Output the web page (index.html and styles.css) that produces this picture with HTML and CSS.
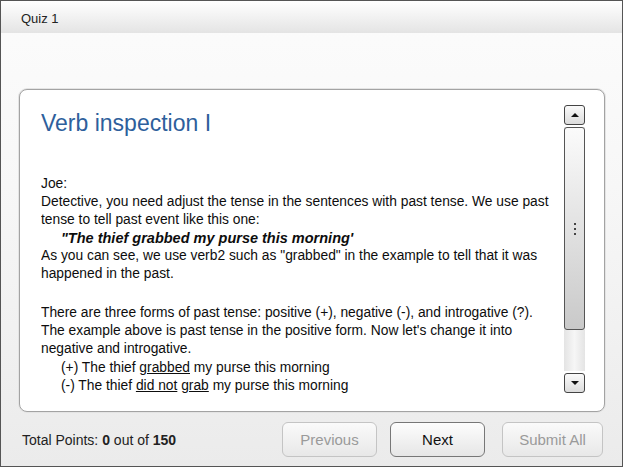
FILE: index.html
```html
<!DOCTYPE html>
<html>
<head>
<meta charset="utf-8">
<link rel="stylesheet" href="styles.css">
</head>
<body>
<div class="frame">
  <header class="topbar">Quiz 1</header>
  <main class="stage">
    <section class="card">
      <div class="content">
        <h1 class="title">Verb inspection I</h1>
        <p class="para">Joe:<br>Detective, you need adjust the tense in the sentences with past tense. We use past tense to tell past event like this one:</p>
        <p class="quote">"The thief grabbed my purse this morning'</p>
        <p class="para">As you can see, we use verb2 such as "grabbed" in the example to tell that it was happened in the past.</p>
        <p class="para gap">There are three forms of past tense: positive (+), negative (-), and introgative (?). The example above is past tense in the positive form. Now let's change it into negative and introgative.</p>
        <p class="item">(+) The thief <u>grabbed</u> my purse this morning</p>
        <p class="item">(-) The thief <u>did not</u> <u>grab</u> my purse this morning</p>
      </div>
      <div class="scrollbar">
        <div class="sb-btn"><span class="tri up"></span></div>
        <div class="track">
          <div class="thumb"><span class="grip"></span><span class="grip"></span><span class="grip"></span></div>
        </div>
        <div class="sb-btn"><span class="tri down"></span></div>
      </div>
    </section>
  </main>
  <footer class="footer">
    <div class="points">Total Points: <b>0</b> out of <b>150</b></div>
    <div class="buttons">
      <button class="btn disabled">Previous</button>
      <button class="btn">Next</button>
      <button class="btn disabled wide">Submit All</button>
    </div>
  </footer>
</div>
</body>
</html>
```
FILE: styles.css
```css
html, body {
  margin: 0;
  padding: 0;
  background: #fff;
}
.frame {
  width: 623px;
  height: 467px;
  box-sizing: border-box;
  border: 1px solid #555;
  display: flex;
  flex-direction: column;
  font-family: "Liberation Sans", Arial, sans-serif;
  color: #111;
  background: linear-gradient(#fcfcfc 0%, #f7f7f7 40%, #ebebeb 100%);
  overflow: hidden;
}
.topbar {
  height: 32px;
  box-sizing: border-box;
  padding: 10px 0 0 20px;
  font-size: 13px;
  line-height: 15px;
  color: #222;
  background: linear-gradient(#ffffff, #e4e4e4);
  flex: none;
}
.stage {
  flex: none;
  padding: 56px 0 0 18px;
}
.card {
  width: 586px;
  height: 323px;
  box-sizing: border-box;
  border: 1px solid #a3a3a3;
  border-radius: 8px;
  background: #fff;
  display: flex;
  padding: 15px 19px 18px 21px;
  box-shadow: 0 0 0 1px #e4e4e4;
}
.content {
  flex: 1;
  overflow: hidden;
  font-size: 13.8px;
  line-height: 18px;
  color: #0d0d0d;
}
.title {
  margin: 5px 0 38px 0;
  font-size: 23px;
  line-height: 27px;
  font-weight: normal;
  color: #2e5f9c;
}
.para {
  margin: 0;
  padding-right: 10px;
}
.gap {
  margin-top: 21px;
}
.quote {
  margin: 0;
  padding-left: 20px;
  font-size: 14.5px;
  font-weight: bold;
  font-style: italic;
}
.item {
  margin: 0;
  padding-left: 20px;
  line-height: 18px;
  position: relative;
  top: 1px;
}
.scrollbar {
  flex: none;
  width: 21px;
  display: flex;
  flex-direction: column;
  gap: 2px;
}
.sb-btn {
  height: 20px;
  box-sizing: border-box;
  border: 1px solid #444;
  border-radius: 3px;
  background: linear-gradient(#fafafa, #dcdcdc);
  display: flex;
  align-items: center;
  justify-content: center;
}
.tri {
  width: 0;
  height: 0;
  border-left: 4px solid transparent;
  border-right: 4px solid transparent;
}
.tri.up { border-bottom: 4px solid #111; }
.tri.down { border-top: 4px solid #111; }
.track {
  flex: 1;
  background: linear-gradient(90deg, #e4e4e4, #f6f6f6 50%, #e4e4e4);
  display: flex;
  flex-direction: column;
}
.thumb {
  height: 203px;
  box-sizing: border-box;
  border: 1px solid #555;
  border-radius: 3px;
  background: linear-gradient(#fbfbfb, #e4e4e4 45%, #c9c9c9);
  display: flex;
  flex-direction: column;
  align-items: center;
  justify-content: center;
  gap: 3px;
}
.grip {
  width: 2px;
  height: 2px;
  background: #444;
}
.footer {
  flex: 1;
  display: flex;
  align-items: center;
  justify-content: space-between;
  padding: 1px 19px 0 21px;
}
.points {
  font-size: 14px;
  color: #222;
}
.buttons {
  display: flex;
  gap: 13px;
}
.btn {
  width: 95px;
  height: 35px;
  box-sizing: border-box;
  border: 1px solid #777;
  border-radius: 6px;
  background: linear-gradient(#fdfdfd, #e6e6e6);
  font-family: "Liberation Sans", Arial, sans-serif;
  font-size: 15px;
  color: #111;
  padding: 0;
}
.btn.disabled {
  border-color: #c4c4c4;
  color: #9a9a9a;
  background: linear-gradient(#fafafa, #e8e8e8);
}
.btn.wide {
  width: 101px;
  margin-left: 4px;
}
```
